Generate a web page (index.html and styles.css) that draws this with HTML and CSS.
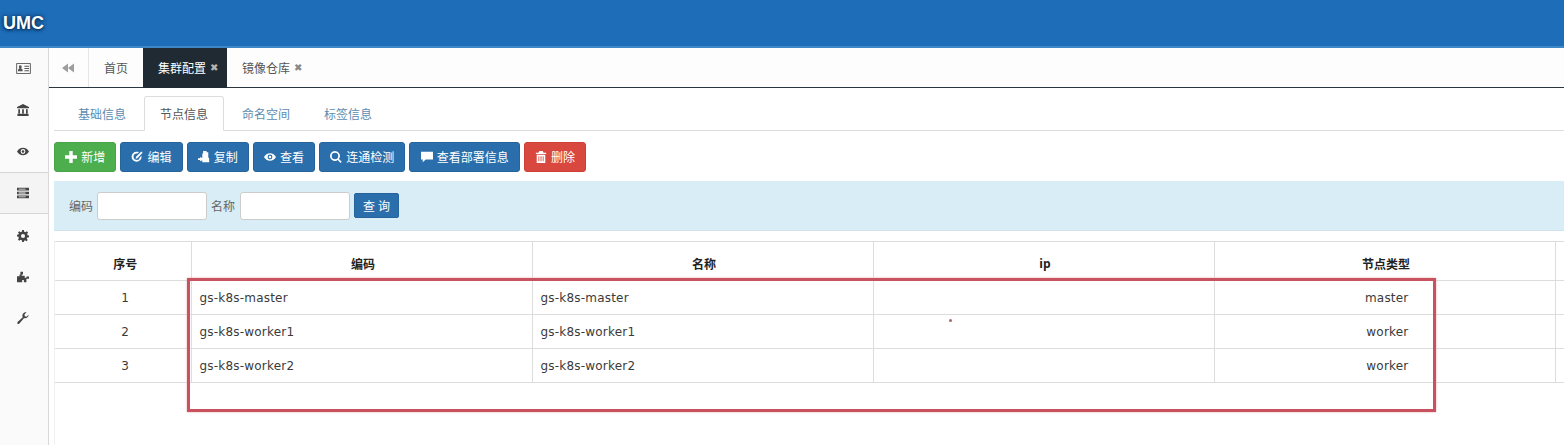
FILE: index.html
```html
<!DOCTYPE html>
<html lang="zh">
<head>
<meta charset="utf-8">
<title>UMC</title>
<link rel="stylesheet" href="styles.css">
</head>
<body>
<svg class="defs" width="0" height="0" aria-hidden="true">
  <symbol id="i-card" viewBox="0 0 16 12"><path fill="none" stroke="currentColor" d="M.5.5h15v11H.5z"/><path fill="currentColor" d="M4.500 2.500a1.500 1.500 0 0 1 1.500 1.500v1l-.6 1 1.600 1v2H2V7l1.600-1L3 5V4a1.500 1.500 0 0 1 1.500-1.500zM9 3h5v1H9zM9 5.500h5v1H9zM9 8h5v1H9z"/></symbol>
  <symbol id="i-bank" viewBox="0 0 14 14"><path fill="currentColor" d="M7 0 14 3.500V5H0V3.500zM1.500 6h2v5h-2zM6 6h2v5H6zM10.500 6h2v5h-2zM.5 11.500h13V14H.5z"/></symbol>
  <symbol id="i-eye" viewBox="0 0 16 12"><path fill="currentColor" fill-rule="evenodd" d="M8 1C4.500 1 1.700 3.300 0 6c1.700 2.700 4.500 5 8 5s6.300-2.300 8-5c-1.700-2.700-4.500-5-8-5zm0 1.800a3.200 3.200 0 1 1 0 6.400 3.200 3.200 0 0 1 0-6.400z"/><circle cx="8" cy="6" r="1.700" fill="currentColor"/></symbol>
  <symbol id="i-list" viewBox="0 0 14 12"><path fill="currentColor" d="M0 0h14v3H0zM0 4.500h14v3H0zM0 9h14v3H0z"/><path fill="#f4f4f4" d="M2 1h8v1H2zM2 5.500h8v1H2zM2 10h8v1H2z"/></symbol>
  <symbol id="i-gear" viewBox="0 0 14 14"><path fill="currentColor" fill-rule="evenodd" d="M6 0h2l.4 2 1.300.6L11.500 1.500 12.900 3l-1.100 1.700.6 1.300 1.600.4v2l-2 .4-.6 1.300 1.100 1.700-1.400 1.400-1.700-1.100-1.300.6L8 14H6l-.4-2-1.300-.6-1.700 1.100L1.100 11l1.100-1.700-.6-1.300L0 7.600v-2l1.600-.4.6-1.300L1.100 3l1.500-1.500 1.700 1.100 1.300-.6zM7 4.600a2.400 2.400 0 1 0 0 4.800 2.400 2.400 0 0 0 0-4.800z"/></symbol>
  <symbol id="i-puzzle" viewBox="0 0 14 12"><path fill="currentColor" d="M4 0h3v3H5.500v1.500H9V7h2V5.500h3V8h-3v4H8V9.500H6V12H0V5h3V3h1z"/></symbol>
  <symbol id="i-wrench" viewBox="0 0 14 14"><path fill="currentColor" d="M13.500 3.200a4 4 0 0 1-5.200 3.900L2.800 13.500a1.300 1.300 0 0 1-2.100-1.700l6-5.800A4 4 0 0 1 11.200.4L8.700 3l.4 2 2 .4 2.200-2.300z"/></symbol>
  <symbol id="i-plus" viewBox="0 0 12 12"><path fill="currentColor" d="M4.300 0h3.400v4.300H12v3.400H7.700V12H4.300V7.700H0V4.300h4.300z"/></symbol>
  <symbol id="i-edit" viewBox="0 0 14 14"><path fill="currentColor" d="M6.500 1a5.800 5.800 0 1 0 5.800 5.800V5.500l-2 2a3.700 3.700 0 1 1-3.500-4.500h.7l2-1.700A5.500 5.500 0 0 0 6.500 1z"/><path fill="currentColor" d="M12 .5l1.500 1.500L7.500 8.500 5.300 9l.6-2.200z"/></symbol>
  <symbol id="i-copy" viewBox="0 0 14 14"><path fill="currentColor" d="M6 0h4v1.500h2V7.500l1 1V13H5v-2H3V8h2V3h1z"/><path fill="currentColor" d="M0 8.500h2.500V6.800l2.700 2.700-2.700 2.700v-1.700H0z"/></symbol>
  <symbol id="i-search" viewBox="0 0 14 14"><path fill="currentColor" fill-rule="evenodd" d="M5.800 0a5.800 5.800 0 0 1 4.600 9.300l3.300 3.200-1.400 1.400-3.200-3.300A5.800 5.800 0 1 1 5.800 0zm0 2a3.800 3.800 0 1 0 0 7.600 3.800 3.800 0 0 0 0-7.600z"/></symbol>
  <symbol id="i-comment" viewBox="0 0 14 12"><path fill="currentColor" d="M0 0h14v9H5.500L2 12V9H0z"/></symbol>
  <symbol id="i-trash" viewBox="0 0 12 14"><path fill="currentColor" d="M4 0h4l1 2h3v1.500H0V2h3zM1 4.500h10V14H1zM3 6v6h1V6zM5.500 6v6h1V6zM8 6v6h1V6z"/></symbol>
  <symbol id="i-back" viewBox="0 0 12 10"><path fill="currentColor" d="M0 5 6 .5v9zM6 5l6-4.500v9z"/></symbol>
</svg>

<header class="topbar"><span class="brand">UMC</span></header>

<div class="shell">
  <aside class="sidebar">
    <a class="side-item"><svg class="side-icon card"><use href="#i-card"/></svg></a>
    <a class="side-item"><svg class="side-icon"><use href="#i-bank"/></svg></a>
    <a class="side-item"><svg class="side-icon eye"><use href="#i-eye"/></svg></a>
    <a class="side-item active"><svg class="side-icon"><use href="#i-list"/></svg></a>
    <a class="side-item"><svg class="side-icon"><use href="#i-gear"/></svg></a>
    <a class="side-item"><svg class="side-icon"><use href="#i-puzzle"/></svg></a>
    <a class="side-item"><svg class="side-icon"><use href="#i-wrench"/></svg></a>
  </aside>

  <main class="main">
    <nav class="pagetabs">
      <a class="pagetab back"><svg class="back-icon"><use href="#i-back"/></svg></a>
      <a class="pagetab home">首页</a>
      <a class="pagetab current">集群配置<span class="close">✖</span></a>
      <a class="pagetab plain">镜像仓库<span class="close">✖</span></a>
    </nav>

    <div class="content">
      <ul class="subtabs">
        <li class="subtab">基础信息</li>
        <li class="subtab selected">节点信息</li>
        <li class="subtab">命名空间</li>
        <li class="subtab">标签信息</li>
      </ul>

      <div class="toolbar">
        <button class="btn green"><svg class="btn-icon"><use href="#i-plus"/></svg>新增</button>
        <button class="btn blue"><svg class="btn-icon"><use href="#i-edit"/></svg>编辑</button>
        <button class="btn blue"><svg class="btn-icon"><use href="#i-copy"/></svg>复制</button>
        <button class="btn blue"><svg class="btn-icon"><use href="#i-eye"/></svg>查看</button>
        <button class="btn blue"><svg class="btn-icon"><use href="#i-search"/></svg>连通检测</button>
        <button class="btn blue"><svg class="btn-icon"><use href="#i-comment"/></svg>查看部署信息</button>
        <button class="btn red"><svg class="btn-icon"><use href="#i-trash"/></svg>删除</button>
      </div>

      <form class="searchbar">
        <label class="field-label">编码</label><input class="field" type="text">
        <label class="field-label">名称</label><input class="field" type="text">
        <button class="btn blue query" type="button">查 询</button>
      </form>

      <div class="grid-wrap">
        <table class="grid">
          <colgroup><col class="c-no"><col class="c-wide"><col class="c-wide"><col class="c-wide"><col class="c-wide"><col class="c-end"></colgroup>
          <thead>
            <tr><th class="num">序号</th><th>编码</th><th>名称</th><th>ip</th><th>节点类型</th><th></th></tr>
          </thead>
          <tbody>
            <tr><td class="num">1</td><td>gs-k8s-master</td><td>gs-k8s-master</td><td></td><td class="kind">master</td><td></td></tr>
            <tr><td class="num">2</td><td>gs-k8s-worker1</td><td>gs-k8s-worker1</td><td></td><td class="kind">worker</td><td></td></tr>
            <tr><td class="num">3</td><td>gs-k8s-worker2</td><td>gs-k8s-worker2</td><td></td><td class="kind">worker</td><td></td></tr>
          </tbody>
        </table>
      </div>
    </div>
  </main>
</div>

<div class="highlight"></div>
<span class="speck"></span>
</body>
</html>
```

FILE: styles.css
```css
* { box-sizing: border-box; }
html, body { margin: 0; padding: 0; height: 445px; overflow: hidden; background: #fff; }
body { font-family: "Open Sans", "Noto Sans CJK SC", sans-serif; font-size: 12px; color: #333; position: relative; }
.defs { position: absolute; }

.topbar { height: 48px; background: #1d6db9; border-bottom: 2px solid #3f88c8; display: flex; align-items: flex-start; }
.brand { font: bold 18px/1 "Liberation Sans", sans-serif; color: #fff; margin: 14px 0 0 3px; text-shadow: 0 1px 3px #06294d, 0 0 5px #06294d; }

.shell { display: flex; height: 397px; }
.sidebar { width: 49px; flex: none; background: #fafafa; border-right: 1px solid #d8d8d8; display: flex; flex-direction: column; }
.side-item { height: 41px; display: flex; align-items: center; justify-content: center; color: #444; padding-right: 2px; }
.side-item:nth-child(2), .side-item:nth-child(4) { height: 42px; }
.side-item:nth-child(5), .side-item:nth-child(7) { height: 43px; }
.side-item:nth-child(6) { height: 39px; }
.side-item.active { background: #f4f4f4; border-top: 1px solid #d6d6d6; border-bottom: 1px solid #d6d6d6; }
.side-icon { width: 12px; height: 12px; }
.side-icon.card { width: 15px; height: 11px; color: #555; }
.side-icon.eye { height: 9px; }

.main { flex: 1; min-width: 0; }
.pagetabs { height: 40px; display: flex; border-bottom: 1px solid #2a3640; background: #fdfdfd; }
.pagetab { display: flex; align-items: center; color: #555; height: 39px; white-space: nowrap; }
.back { width: 40px; border-right: 1px solid #e5e5e5; color: #9e9e9e; justify-content: center; padding-right: 1px; }
.back-icon { width: 12px; height: 10px; }
.home { width: 54px; justify-content: center; }
.current { width: 84px; background: #1f2a33; color: #fff; height: 40px; padding-left: 15px; }
.plain { width: 82px; padding-left: 15px; }
.close { font: bold 10px/1 "DejaVu Sans", sans-serif; color: #888; margin-left: 4px; }
.current .close { color: #b5b5b5; }

.content { padding: 8px 0 0 5px; }
.subtabs { list-style: none; margin: 0; padding: 0 0 0 8px; height: 35px; display: flex; gap: 2px; border-bottom: 1px solid #ddd; }
.subtab { width: 80px; height: 35px; padding: 10px 16px 0; color: #5b8bb0; line-height: 17px; }
.subtab.selected { background: #fff; border: 1px solid #ddd; border-bottom-color: #fff; border-radius: 3px 3px 0 0; color: #555; padding: 9px 15px 0; }

.toolbar { display: flex; gap: 4px; margin-top: 11px; height: 30px; }
.btn { height: 30px; border: 1px solid transparent; border-radius: 3px; color: #fff; font: 12px "Open Sans", "Noto Sans CJK SC", sans-serif; padding: 0 10.15px; display: inline-flex; align-items: center; justify-content: center; white-space: nowrap; }
.btn-icon { width: 12px; height: 12px; margin-right: 4px; flex: none; }
.green { background: #4cae4c; border-color: #47a447; }
.blue { background: #2a6fac; border-color: #24639b; }
.red { background: #d9483f; border-color: #cb3f37; }
.query { width: 45px; height: 25px; padding: 0; border-radius: 2px; }

.searchbar { margin-top: 9px; width: 1510px; height: 50px; background: #d9edf7; border-bottom: 1px solid #cfe4ef; display: flex; align-items: center; padding-left: 15px; }
.field-label { color: #666; margin-right: 4px; }
.field { width: 110px; height: 28px; border: 1px solid #ccc; border-radius: 3px; background: #fff; margin-right: 4px; }
.field + .field-label { margin-right: 5px; }

.grid-wrap { margin-top: 10px; height: 204px; border-left: 1px solid #f0f0f0; }
.grid { border-collapse: collapse; table-layout: fixed; width: 1509px; }
.c-no { width: 136px; }
.c-wide { width: 341px; }
.c-end { width: 9px; }
.grid th, .grid td { border: 1px solid #ddd; padding: 0 8px; white-space: nowrap; }
.grid th:first-child, .grid td:first-child { border-left: 0; }
.grid th { height: 39px; padding: 5px 8px 0 11px; text-align: center; font-weight: bold; color: #222; }
.grid td { height: 34px; font: 12px "DejaVu Sans", sans-serif; letter-spacing: .2px; color: #3a3a3a; }
.grid .num { text-align: center; padding-left: 13px; }
.grid .kind { text-align: right; padding-right: 146px; }

.highlight { position: absolute; left: 187px; top: 278px; width: 1249px; height: 134px; border: 3px solid #c8525f; box-shadow: 0 0 2px #e9a7ad; pointer-events: none; }
.speck { position: absolute; left: 949px; top: 319px; width: 3px; height: 3px; border-radius: 50%; background: #a66; }
```
